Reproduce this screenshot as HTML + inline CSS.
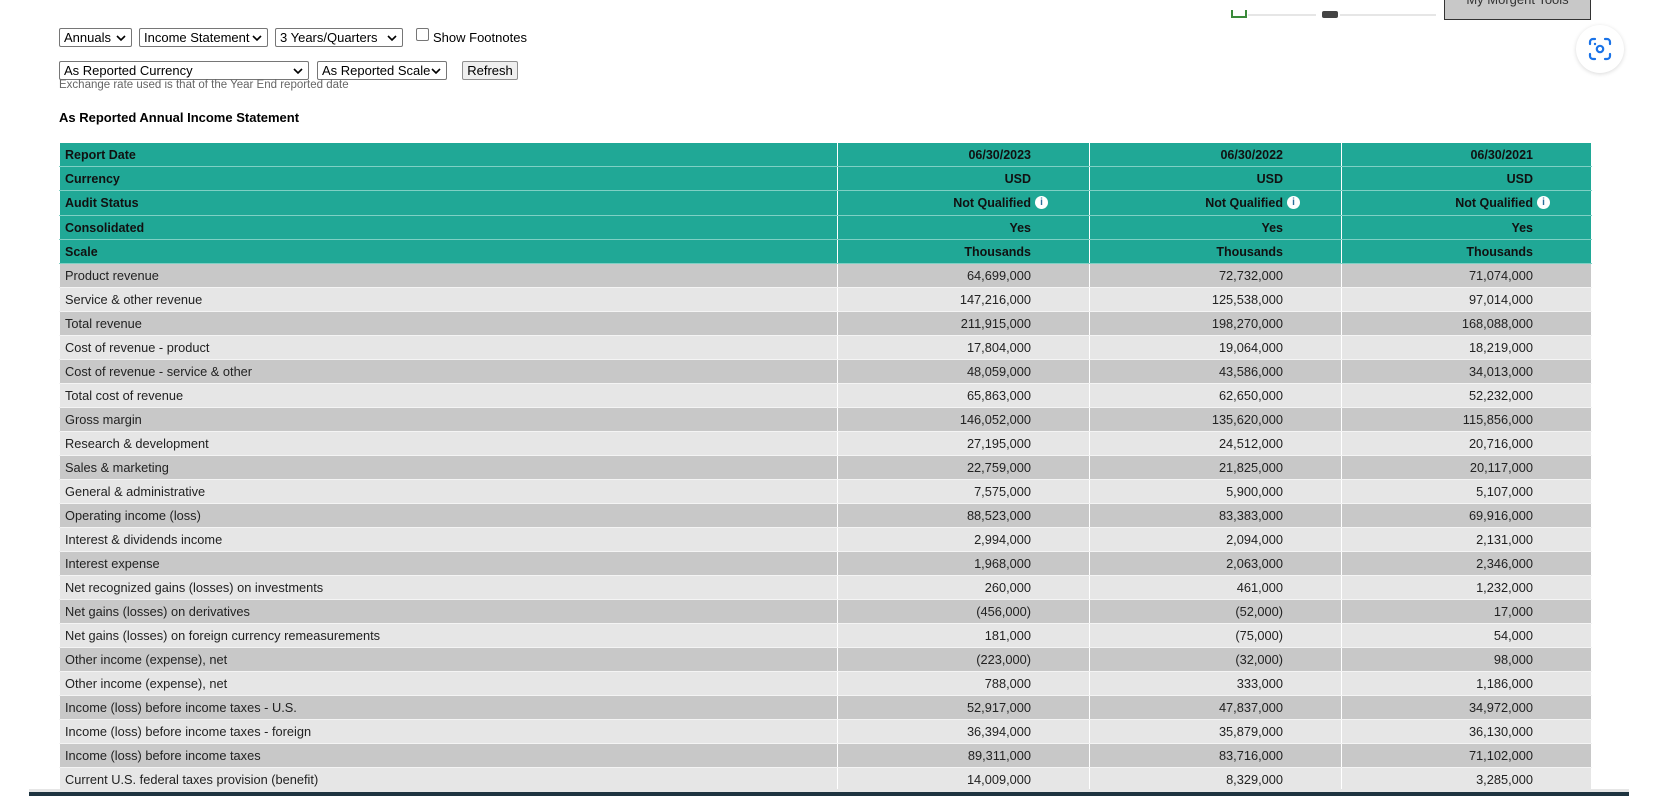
<!DOCTYPE html>
<html><head><meta charset="utf-8">
<style>
html,body{margin:0;padding:0;background:#fff;width:1662px;height:806px;overflow:hidden;position:relative;font-family:"Liberation Sans",Arial,sans-serif;}
.abs{position:absolute;}
.sel{position:absolute;border:1px solid #767676;border-radius:2px;background:#fff;font-size:13px;line-height:17px;padding-left:4px;box-sizing:border-box;height:19px;color:#000;}
.sel svg{position:absolute;right:5px;top:6px;}
.btn{position:absolute;border:1px solid #8f8f8f;border-radius:2px;background:#efefef;font-size:13px;text-align:center;box-sizing:border-box;line-height:17px;}
table{position:absolute;left:59px;top:142px;border-collapse:collapse;width:1532px;table-layout:fixed;}
td{padding:0 0 0 5px;font-size:12.8px;color:#222;height:23px;border:1px solid #fff;border-top:1px solid #f4f4f4;border-bottom:1px solid #f4f4f4;white-space:nowrap;overflow:visible}
td.n{text-align:right;padding-right:58px;position:relative}
tr.h td{background:#20a896;font-weight:bold;font-size:12.5px;color:#111;border-color:#fff;border-bottom:1px solid #7fd0c4;}
tr.g td{background:#c8c8c8}
tr.l td{background:#e6e6e6}
.i{position:absolute;top:5px;width:13px;height:13px;border-radius:50%;background:#fff;color:#2a6f9a;font-size:10px;line-height:13px;text-align:center;font-weight:bold;margin-left:4px;display:inline-block;}
</style></head><body>

<div class="abs" style="left:1231px;top:10px;width:16px;height:8px;border:2px solid #3a8a3a;border-top:none;box-sizing:border-box"></div>
<div class="abs" style="left:1248px;top:14px;width:68px;height:2px;background:#e6e6e6"></div>
<div class="abs" style="left:1322px;top:11px;width:16px;height:7px;background:#444;border-radius:2px"></div>
<div class="abs" style="left:1340px;top:14px;width:96px;height:2px;background:#e6e6e6"></div>
<div class="abs" style="left:1444px;top:-8px;width:147px;height:28px;background:#c8c8c8;border:1px solid #333;box-sizing:border-box;font-size:13px;color:#333;text-align:center;line-height:14px;overflow:hidden">My Morgent Tools</div>

<div class="abs" style="left:1576px;top:25px;width:48px;height:48px;border-radius:50%;background:#fff;box-shadow:0 1px 4px rgba(0,0,0,.15)">
<svg width="48" height="48" viewBox="0 0 48 48"><g fill="none" stroke="#1a73e8" stroke-width="2.2" stroke-linecap="round"><path d="M14 19v-2a3 3 0 0 1 3-3h2M29 14h2a3 3 0 0 1 3 3v2M34 29v2a3 3 0 0 1-3 3h-2M19 34h-2a3 3 0 0 1-3-3v-2"/><circle cx="24" cy="24" r="3.2"/></g><circle cx="19" cy="19" r="1.2" fill="#1a73e8"/></svg></div>

<div class="sel" style="left:59px;top:28px;width:73px">Annuals<svg width="10" height="7"><path d="M1 1l4 4 4-4" stroke="#000" stroke-width="1.6" fill="none"/></svg></div>
<div class="sel" style="left:139px;top:28px;width:129px">Income Statement<svg width="10" height="7"><path d="M1 1l4 4 4-4" stroke="#000" stroke-width="1.6" fill="none"/></svg></div>
<div class="sel" style="left:275px;top:28px;width:128px">3 Years/Quarters<svg width="10" height="7"><path d="M1 1l4 4 4-4" stroke="#000" stroke-width="1.6" fill="none"/></svg></div>
<div class="abs" style="left:416px;top:28px;width:13px;height:13px;border:1px solid #767676;border-radius:2px;box-sizing:border-box"></div>
<div class="abs" style="left:433px;top:30px;font-size:13px">Show Footnotes</div>
<div class="sel" style="left:59px;top:61px;width:250px">As Reported Currency<svg width="10" height="7"><path d="M1 1l4 4 4-4" stroke="#000" stroke-width="1.6" fill="none"/></svg></div>
<div class="sel" style="left:317px;top:61px;width:130px">As Reported Scale<svg width="10" height="7"><path d="M1 1l4 4 4-4" stroke="#000" stroke-width="1.6" fill="none"/></svg></div>
<div class="btn" style="left:462px;top:61px;width:56px;height:19px">Refresh</div>
<div class="abs" style="left:59px;top:79px;font-size:11.5px;color:#666">Exchange rate used is that of the Year End reported date</div>
<div class="abs" style="left:59px;top:110px;font-size:13px;font-weight:bold;color:#000">As Reported Annual Income Statement</div>

<table>
<colgroup><col style="width:778px"><col style="width:252px"><col style="width:252px"><col style="width:250px"></colgroup>
<tr class="h"><td>Report Date</td><td class="n">06/30/2023</td><td class="n">06/30/2022</td><td class="n">06/30/2021</td></tr>
<tr class="h"><td>Currency</td><td class="n">USD</td><td class="n">USD</td><td class="n">USD</td></tr>
<tr class="h"><td style="height:24px">Audit Status</td><td class="n">Not Qualified<span class="i">i</span></td><td class="n">Not Qualified<span class="i">i</span></td><td class="n">Not Qualified<span class="i">i</span></td></tr>
<tr class="h"><td>Consolidated</td><td class="n">Yes</td><td class="n">Yes</td><td class="n">Yes</td></tr>
<tr class="h"><td>Scale</td><td class="n">Thousands</td><td class="n">Thousands</td><td class="n">Thousands</td></tr>
<tr class="g"><td>Product revenue</td><td class="n">64,699,000</td><td class="n">72,732,000</td><td class="n">71,074,000</td></tr>
<tr class="l"><td>Service &amp; other revenue</td><td class="n">147,216,000</td><td class="n">125,538,000</td><td class="n">97,014,000</td></tr>
<tr class="g"><td>Total revenue</td><td class="n">211,915,000</td><td class="n">198,270,000</td><td class="n">168,088,000</td></tr>
<tr class="l"><td>Cost of revenue - product</td><td class="n">17,804,000</td><td class="n">19,064,000</td><td class="n">18,219,000</td></tr>
<tr class="g"><td>Cost of revenue - service &amp; other</td><td class="n">48,059,000</td><td class="n">43,586,000</td><td class="n">34,013,000</td></tr>
<tr class="l"><td>Total cost of revenue</td><td class="n">65,863,000</td><td class="n">62,650,000</td><td class="n">52,232,000</td></tr>
<tr class="g"><td>Gross margin</td><td class="n">146,052,000</td><td class="n">135,620,000</td><td class="n">115,856,000</td></tr>
<tr class="l"><td>Research &amp; development</td><td class="n">27,195,000</td><td class="n">24,512,000</td><td class="n">20,716,000</td></tr>
<tr class="g"><td>Sales &amp; marketing</td><td class="n">22,759,000</td><td class="n">21,825,000</td><td class="n">20,117,000</td></tr>
<tr class="l"><td>General &amp; administrative</td><td class="n">7,575,000</td><td class="n">5,900,000</td><td class="n">5,107,000</td></tr>
<tr class="g"><td>Operating income (loss)</td><td class="n">88,523,000</td><td class="n">83,383,000</td><td class="n">69,916,000</td></tr>
<tr class="l"><td>Interest &amp; dividends income</td><td class="n">2,994,000</td><td class="n">2,094,000</td><td class="n">2,131,000</td></tr>
<tr class="g"><td>Interest expense</td><td class="n">1,968,000</td><td class="n">2,063,000</td><td class="n">2,346,000</td></tr>
<tr class="l"><td>Net recognized gains (losses) on investments</td><td class="n">260,000</td><td class="n">461,000</td><td class="n">1,232,000</td></tr>
<tr class="g"><td>Net gains (losses) on derivatives</td><td class="n">(456,000)</td><td class="n">(52,000)</td><td class="n">17,000</td></tr>
<tr class="l"><td>Net gains (losses) on foreign currency remeasurements</td><td class="n">181,000</td><td class="n">(75,000)</td><td class="n">54,000</td></tr>
<tr class="g"><td>Other income (expense), net</td><td class="n">(223,000)</td><td class="n">(32,000)</td><td class="n">98,000</td></tr>
<tr class="l"><td>Other income (expense), net</td><td class="n">788,000</td><td class="n">333,000</td><td class="n">1,186,000</td></tr>
<tr class="g"><td>Income (loss) before income taxes - U.S.</td><td class="n">52,917,000</td><td class="n">47,837,000</td><td class="n">34,972,000</td></tr>
<tr class="l"><td>Income (loss) before income taxes - foreign</td><td class="n">36,394,000</td><td class="n">35,879,000</td><td class="n">36,130,000</td></tr>
<tr class="g"><td>Income (loss) before income taxes</td><td class="n">89,311,000</td><td class="n">83,716,000</td><td class="n">71,102,000</td></tr>
<tr class="l"><td>Current U.S. federal taxes provision (benefit)</td><td class="n">14,009,000</td><td class="n">8,329,000</td><td class="n">3,285,000</td></tr>
</table>

<div class="abs" style="left:0;top:789px;width:1662px;height:17px;background:#fff"></div>
<div class="abs" style="left:29px;top:789px;width:1600px;height:3px;background:#e6e6e6"></div>
<div class="abs" style="left:29px;top:792px;width:1600px;height:4px;background:#1e3440"></div>
</body></html>
